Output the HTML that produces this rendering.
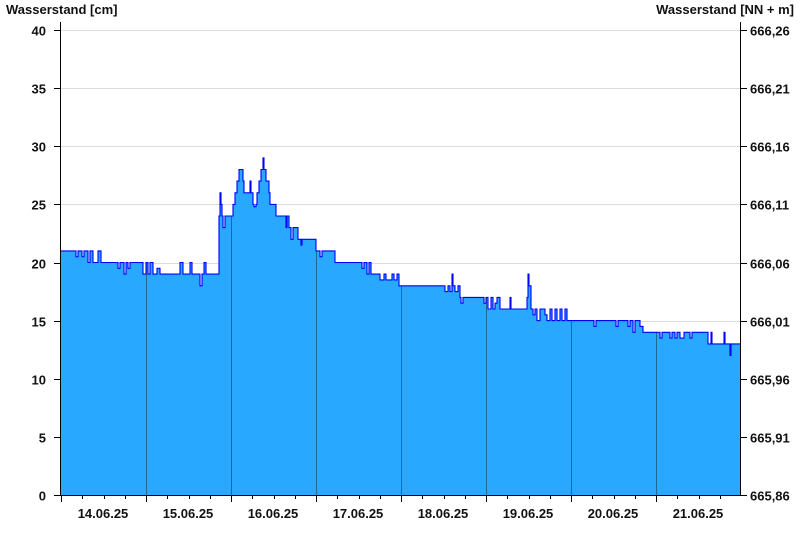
<!DOCTYPE html>
<html><head><meta charset="utf-8"><style>
html,body{margin:0;padding:0;background:#fff;width:800px;height:550px;overflow:hidden}
svg text{font-family:"Liberation Sans",Arial,sans-serif;font-weight:bold;font-size:13px;fill:#111}
</style></head><body>
<svg id="s" width="800" height="550" xmlns="http://www.w3.org/2000/svg">
<defs><clipPath id="cp"><path id="cpath"/></clipPath></defs>
<text x="6" y="14">Wasserstand [cm]</text>
<text x="794" y="14" text-anchor="end">Wasserstand [NN + m]</text>
<g id="grid"></g>
<path id="area" fill="#29a8ff" stroke="none"/>
<g id="days" clip-path="url(#cp)"></g>
<path id="line" fill="none" stroke="#0000ff" stroke-width="1.1"/>
<g id="axes" stroke="#000" stroke-width="1"></g>
<g id="labels"></g>
</svg>
<script>
var ns="http://www.w3.org/2000/svg";
function el(p,t,a,txt){var e=document.createElementNS(ns,t);for(var k in a)e.setAttribute(k,a[k]);if(txt!=null)e.textContent=txt;p.appendChild(e);return e;}
function Y(v){return 495-v*11.625;}
var grid=document.getElementById('grid'),axes=document.getElementById('axes'),labels=document.getElementById('labels'),days=document.getElementById('days');
var rl=["665,86","665,91","665,96","666,01","666,06","666,11","666,16","666,21","666,26"];
for(var i=0;i<=8;i++){var y=Math.round(Y(i*5))+0.5;
 if(i>0)el(grid,'line',{x1:61,x2:740,y1:y,y2:y,stroke:'#dcdcdc'});
 el(axes,'line',{x1:54,x2:61,y1:y,y2:y});
 el(axes,'line',{x1:740,x2:747,y1:y,y2:y});
 el(labels,'text',{x:46,y:y+5,'text-anchor':'end'},String(i*5));
 el(labels,'text',{x:750,y:y+5},rl[i]);}
el(axes,'line',{x1:60.5,x2:60.5,y1:22,y2:495});
el(axes,'line',{x1:740.5,x2:740.5,y1:22,y2:495});
el(axes,'line',{x1:60,x2:741,y1:495.5,y2:495.5});
var dl=["14.06.25","15.06.25","16.06.25","17.06.25","18.06.25","19.06.25","20.06.25","21.06.25"];
for(var d=0;d<8;d++){var x0=61+d*85;
 el(axes,'line',{x1:x0+0.5,x2:x0+0.5,y1:495,y2:502});
 for(var m=1;m<4;m++){var xm=Math.round(x0+m*21.25)+0.5;el(axes,'line',{x1:xm,x2:xm,y1:495,y2:499});}
 if(d>0)el(days,'line',{x1:x0+0.5,x2:x0+0.5,y1:150,y2:495,stroke:'#1d6a9a'});
 el(labels,'text',{x:x0+42,y:518,'text-anchor':'middle'},dl[d]);}
var seg=[[61,21],[76,20.5],[78,21],[82,20.5],[84,21],[88,20],[90,21],[93,20],[98,21],[101,20],[118,19.5],[120,20],[124,19],[126,20],[128,19.5],[130,20],[143,19],[146,20],[148,19],[150,20],[153,19],[157,19.5],[160,19],[180,20],[183,19],[190,20],[192,19],[200,18],[202,19],[204,20],[206,19],[219,24],[220,26],[221,25],[222,24],[223,23],[225,24],[233,25],[235,26],[237,27],[239,28],[243,27],[244,26],[250,27],[251,26],[253,25],[254,24.8],[256,25],[257,26],[259,27],[261,28],[263,29],[264,28],[266,27],[269,26],[270,25],[276,24],[286,23],[287,24],[289,23],[291,22],[293,23],[298,22],[301,21.5],[302,22],[316,21],[320,20.5],[322,21],[335,20],[362,19.5],[364,20],[367,19],[369,20],[371,19],[380,18.5],[384,19],[386,18.5],[392,19],[394,18.5],[397,19],[399,18],[445,17.5],[448,18],[450,17.5],[452,19],[453,18],[455,17.5],[458,18],[460,17],[461,16.5],[463,17],[484,16.5],[486,17],[488,16],[491,17],[493,16],[495,16.5],[497,17],[500,16],[510,17],[511,16],[527,17],[528,19],[529,18],[531,16],[533,15.5],[535,16],[537,15],[540,16],[545,15.5],[547,15],[550,16],[552,15],[555,16],[557,15],[560,16],[562,15],[565,16],[567,15],[570,15],[594,14.5],[596,15],[616,14.5],[618,15],[628,14.5],[630,15],[633,14],[635,15],[640,14.5],[643,14],[647,14],[660,13.5],[662,14],[670,13.5],[672,14],[675,13.5],[677,14],[680,13.5],[684,14],[690,13.5],[692,14],[708,13],[711,14],[712,13],[724,14],[725,13],[730,12],[731,13],[740,13]];
var d2="";for(var i=0;i<seg.length;i++){var x=seg[i][0],y=Y(seg[i][1]).toFixed(1);
 if(i==0)d2+="M"+x+" "+y;else d2+=" H"+x+" V"+y;}
d2+=" H740";
var full=d2+" V495 H61 Z";
document.getElementById('line').setAttribute('d',d2);
document.getElementById('area').setAttribute('d',full);
document.getElementById('cpath').setAttribute('d',full);
</script>
</body></html>
